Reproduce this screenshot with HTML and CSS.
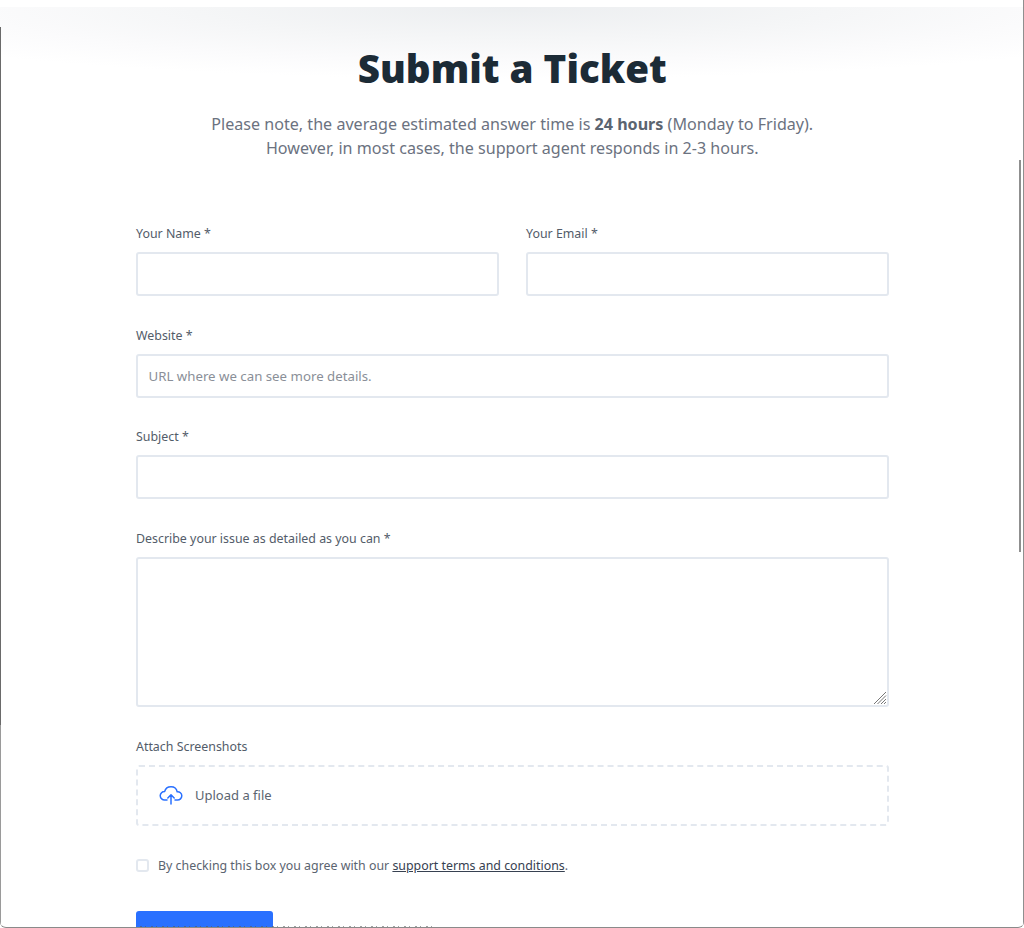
FILE: index.html
```html
<!DOCTYPE html>
<html lang="en">
<head>
<meta charset="utf-8">
<title>Submit a Ticket</title>
<link rel="stylesheet" href="styles.css">
</head>
<body>
<div class="window">
  <div class="top-strip"></div>
  <main class="page">
    <div class="glow"></div>
    <h1 class="title">Submit a Ticket</h1>
    <p class="intro">Please note, the average estimated answer time is <strong>24 hours</strong> (Monday to Friday).<br>However, in most cases, the support agent responds in 2-3 hours.</p>
    <form class="form">
      <div class="row">
        <div class="field">
          <label class="label">Your Name *</label>
          <input class="input" type="text">
        </div>
        <div class="field">
          <label class="label">Your Email *</label>
          <input class="input" type="text">
        </div>
      </div>
      <div class="field">
        <label class="label">Website *</label>
        <input class="input" type="text" placeholder="URL where we can see more details.">
      </div>
      <div class="field">
        <label class="label">Subject *</label>
        <input class="input" type="text">
      </div>
      <div class="field">
        <label class="label">Describe your issue as detailed as you can *</label>
        <div class="textarea-wrap">
          <textarea class="input textarea"></textarea>
          <svg class="grip" viewBox="0 0 14 14" width="14" height="14" fill="none" stroke="#777" stroke-width="1">
            <path d="M1 13 13 1M4.5 13 13 4.5M8 13l5-5M11 13l2-2"/>
          </svg>
        </div>
      </div>
      <div class="field">
        <label class="label">Attach Screenshots</label>
        <div class="upload">
          <svg class="upload-icon" viewBox="0 0 24 20" width="24" height="20" fill="none" stroke="#2970ff" stroke-width="1.5" stroke-linecap="round" stroke-linejoin="round">
            <path d="M8 15H6a4.4 4.4 0 0 1-4.8-4.2A4.3 4.3 0 0 1 5.6 6.6 6.6 6.6 0 0 1 12 1.8a6.3 6.3 0 0 1 6.2 5 4.1 4.1 0 0 1 4.6 4A4.2 4.2 0 0 1 18.4 15H16"/>
            <path d="M12 19V10M8.8 13 12 9.8 15.2 13"/>
          </svg>
          <span class="upload-text">Upload a file</span>
        </div>
      </div>
      <div class="agree">
        <span class="checkbox"></span>
        <span class="agree-text">By checking this box you agree with our <a class="link" href="#">support terms and conditions</a>.</span>
      </div>
      <button class="submit" type="button" aria-label="Submit"></button>
    </form>
  </main>
  <div class="scrollbar"></div>
  <div class="edge-bits"></div>
</div>
</body>
</html>
```

FILE: styles.css
```css
* { box-sizing: border-box; }
html, body { margin: 0; padding: 0; height: 100%; background: #fff; overflow: hidden; }
body { font-family: "Noto Sans", "Open Sans", sans-serif; color: #4b5563; }
.window { position: relative; height: 928px; overflow: hidden; display: flex; flex-direction: column; background: #fff; border-bottom: 1px solid #8a8a8a; border-bottom-left-radius: 6px; border-bottom-right-radius: 6px; }
.window::before { content: ""; position: absolute; left: 0; top: 27px; bottom: 0; width: 1px; background: linear-gradient(#6a6a6a 0, #6a6a6a 698px, #9a9a9a 698px); z-index: 3; }
.window::after { content: ""; position: absolute; right: 0; top: 0; bottom: 0; width: 1px; background: #8f8f8f; z-index: 3; }
.top-strip { height: 7px; background: #fff; flex: none; position: relative; z-index: 2; }
.page { position: relative; flex: 1; padding: 0 135.5px 0 136px; }
.glow { position: absolute; left: 0; right: 0; top: 0; height: 72px; background: radial-gradient(ellipse 70% 100% at 50% 0, #eceef0 0%, #f5f6f7 45%, #fbfbfc 75%, #fff 100%); }
.title { position: relative; margin: 0; padding-top: 36px; text-align: center; font-size: 38.6px; line-height: 50px; font-weight: 900; color: #1c2b36; }
.intro { position: relative; margin: 19px 0 0; text-align: center; font-size: 16.1px; line-height: 24px; color: #6b7280; }
.intro strong { font-weight: 700; color: #5b6470; }
.form { display: flex; flex-direction: column; gap: 29.7px; margin-top: 64px; }
.row { display: grid; grid-template-columns: 1fr 1fr; gap: 27.5px; }
.field { display: flex; flex-direction: column; gap: 9px; }
.label { font-size: 12.4px; line-height: 19px; color: #535c69; }
.input { display: block; width: 100%; height: 44px; background: #fff; border: 2px solid #e3e8ef; border-radius: 3px; padding: 1px 10.5px 0; font: 13.25px "Noto Sans", sans-serif; color: #4b5563; outline: none; }
.input::placeholder { color: #8a8f98; opacity: 1; }
.textarea-wrap { position: relative; }
.textarea { height: 150px; resize: none; }
.grip { position: absolute; right: 2px; bottom: 2px; }
.upload { display: flex; align-items: center; gap: 12px; height: 61px; padding-left: 21px; border: 2px dashed #e3e8ef; border-radius: 3px; }
.upload-text { font-size: 13px; color: #5b6470; }
.agree { display: flex; align-items: center; gap: 9px; margin-top: 2px; }
.checkbox { width: 13px; height: 13px; margin-bottom: 2px; border: 2px solid #e3e8ef; border-radius: 3px; flex: none; }
.agree-text { font-size: 12.38px; line-height: 18px; color: #5b6470; }
.link { color: #374151; text-decoration: underline; }
.submit { width: 137px; height: 44px; align-self: flex-start; margin-top: 6px; background: #2970ff; border: none; border-radius: 3px; }
.scrollbar { position: absolute; right: 3px; top: 160px; width: 2px; height: 392px; background: #8f8f8f; }
.edge-bits { position: absolute; left: 140px; bottom: 0; width: 295px; height: 1px; opacity: .55; background: repeating-linear-gradient(90deg, #555 0 2px, transparent 2px 5px, #555 5px 6px, transparent 6px 11px); }
```
